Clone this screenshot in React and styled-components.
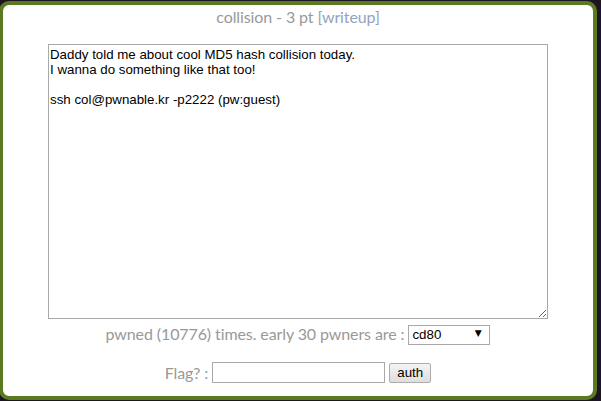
import React from "react";
import styled, { createGlobalStyle } from "styled-components";

const Global = createGlobalStyle`
  html, body { margin: 0; padding: 0; background: #1c1423; }
  body { width: 601px; height: 401px; overflow: hidden; }
`;

const Frame = styled.div`
  box-sizing: border-box;
  width: 601px;
  height: 401px;
  padding: 1px 4px 1px 0;
`;

const Card = styled.div`
  box-sizing: border-box;
  height: 100%;
  margin-left: -1px;
  background: #ffffff;
  border: 4px solid #5a7a22;
  border-radius: 10px;
  display: flex;
  flex-direction: column;
  align-items: center;
  font-family: Lato, "Liberation Sans", sans-serif;
  color: #999999;
  letter-spacing: -0.1px;
`;

const Title = styled.div`
  height: 24px;
  line-height: 24px;
  font-size: 16px;
  margin-bottom: 15px;
`;

const Link = styled.a`
  color: #93a2bf;
  text-decoration: none;
`;

const Desc = styled.textarea`
  box-sizing: border-box;
  width: 500px;
  height: 275px;
  margin: 0;
  padding: 2px 1px;
  border: 1px solid #a9a9a9;
  font-family: "Liberation Sans", Arial, sans-serif;
  font-size: 13.3px;
  line-height: 15px;
  letter-spacing: 0;
  color: #000;
  outline: none;
`;

const Row = styled.div`
  display: flex;
  align-items: center;
  gap: ${(p) => p.$gap}px;
  margin-top: ${(p) => p.$top}px;
  height: ${(p) => p.$h}px;
  font-size: 16px;
`;

const SelectWrap = styled.div`
  position: relative;
  width: 82px;
  height: 20px;
`;

const Select = styled.select`
  appearance: none;
  box-sizing: border-box;
  width: 100%;
  height: 100%;
  margin: 0;
  padding: 0 0 0 3px;
  border: 1px solid #a9a9a9;
  border-radius: 0;
  background: #fff;
  font-family: "Liberation Sans", Arial, sans-serif;
  font-size: 13.3px;
  letter-spacing: 0;
  color: #000;
  outline: none;
`;

const Arrow = styled.span`
  position: absolute;
  right: 9px;
  top: 4px;
  font-size: 9px;
  line-height: 12px;
  color: #000;
  pointer-events: none;
  font-family: "DejaVu Sans", sans-serif;
`;

const FlagInput = styled.input`
  box-sizing: border-box;
  width: 173px;
  height: 21px;
  margin: 0;
  padding: 1px 2px;
  border: 1px solid #a9a9a9;
  font-family: "Liberation Sans", Arial, sans-serif;
  font-size: 13.3px;
  outline: none;
`;

const Button = styled.button`
  box-sizing: border-box;
  width: 42px;
  height: 20px;
  margin: 0;
  padding: 0;
  border: 1px solid #adadad;
  border-radius: 2px;
  background: linear-gradient(#f4f4f4, #dedede);
  font-family: "Liberation Sans", Arial, sans-serif;
  font-size: 13.3px;
  letter-spacing: 0;
  color: #000;
`;

export default function App() {
  return (
    <>
      <Global />
      <Frame>
        <Card>
          <Title>
            collision - 3 pt <Link href="#">[writeup]</Link>
          </Title>
          <Desc
            readOnly
            defaultValue={
              "Daddy told me about cool MD5 hash collision today.\nI wanna do something like that too!\n\nssh col@pwnable.kr -p2222 (pw:guest)\n"
            }
          />
          <Row $top={4} $h={20} $gap={4}>
            <span>pwned (10776) times. early 30 pwners are :</span>
            <SelectWrap>
              <Select defaultValue="cd80">
                <option value="cd80">cd80</option>
              </Select>
              <Arrow>▼</Arrow>
            </SelectWrap>
          </Row>
          <Row $top={19} $h={21} $gap={4}>
            <span>Flag? :</span>
            <FlagInput type="text" />
            <Button>auth</Button>
          </Row>
        </Card>
      </Frame>
    </>
  );
}
